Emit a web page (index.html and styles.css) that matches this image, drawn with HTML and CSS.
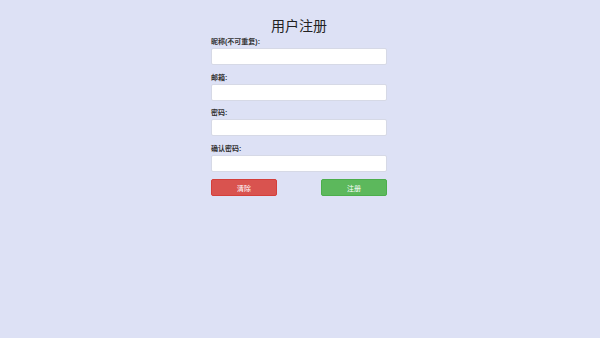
FILE: index.html
```html
<!DOCTYPE html>
<html>
<head>
    <meta charset="utf-8">
    <title>用户注册</title>
    <link rel="stylesheet" href="styles.css">
</head>
<body>

<h1 class="title">用户注册</h1>
<form class="reg-form">
    <div class="form-group">
        <label for="nick">昵称(不可重复):</label>
        <input type="text" id="nick">
    </div>
    <div class="form-group">
        <label for="email">邮箱:</label>
        <input type="text" id="email">
    </div>
    <div class="form-group">
        <label for="pwd">密码:</label>
        <input type="password" id="pwd">
    </div>
    <div class="form-group">
        <label for="pwd2">确认密码:</label>
        <input type="password" id="pwd2">
    </div>
    <div class="btns">
        <button type="reset" class="btn btn-clear">清除</button>
        <button type="button" class="btn btn-reg">注册</button>
    </div>
</form>

</body>
</html>
```

FILE: styles.css
```css
*{
    padding: 0;
    margin: 0;
}

body{
    background-color: #dde1f5;
    font-family: "Liberation Sans", "Noto Sans CJK SC", sans-serif;
    color: #333;
    padding-right: 2px;
}

.title{
    padding-top: 16px;
    margin-bottom: 1px;
    font-size: 14px;
    line-height: 20px;
    font-weight: normal;
    text-align: center;
    color: #222;
}

.reg-form{
    width: 176px;
    margin: 0 auto;
}

.form-group{
    margin-bottom: 7.5px;
}

.form-group label{
    display: block;
    font-size: 7px;
    line-height: 8px;
    font-weight: bold;
    padding-top: 1px;
    margin-bottom: 2px;
}

.form-group input{
    display: block;
    box-sizing: border-box;
    width: 100%;
    height: 17px;
    border: 1px solid #d6d9e6;
    border-radius: 2px;
    background-color: #fff;
    outline: none;
}

.btns{
    display: flex;
    justify-content: space-between;
}

.btn{
    box-sizing: border-box;
    width: 66px;
    height: 17px;
    border-radius: 2px;
    color: #fff;
    font-size: 7px;
    font-family: inherit;
}

.btn-clear{
    background-color: #d9534f;
    border: 1px solid #d43f3a;
}

.btn-reg{
    background-color: #5cb85c;
    border: 1px solid #4cae4c;
}
```
